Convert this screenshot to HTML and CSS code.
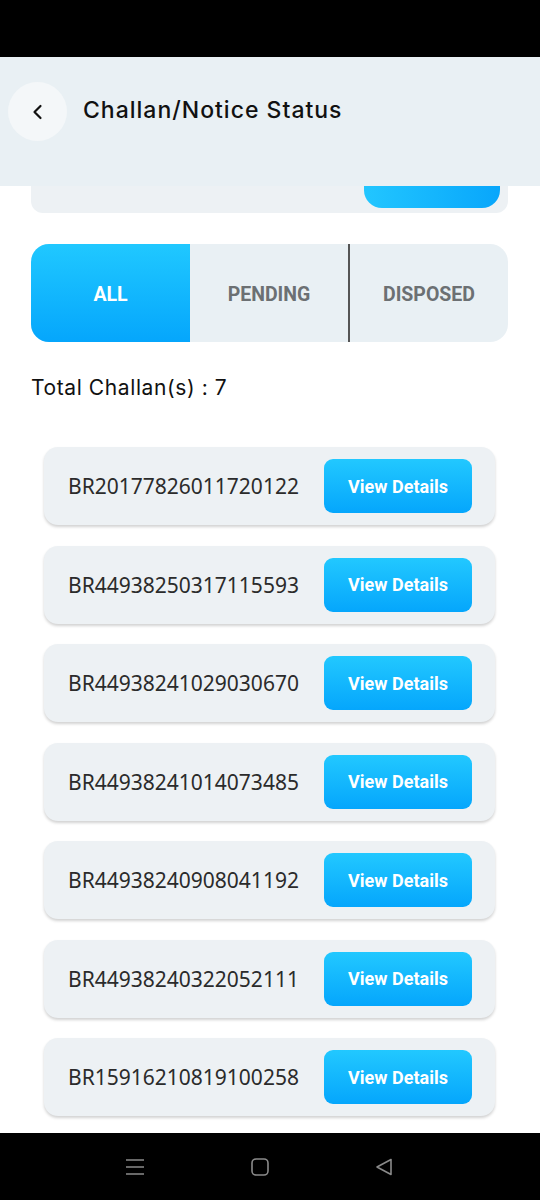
FILE: index.html
```html
<!DOCTYPE html>
<html lang="en">
<head>
    <meta charset="UTF-8">
    <meta name="viewport" content="width=device-width, initial-scale=1.0">
    <title>Challan/Notice Status</title>
    <link rel="stylesheet" href="styles.css">
</head>
<body>

<div class="phone">
    <div class="status-bar"></div>

    <div class="header">
        <div class="back-btn">
            <svg width="20" height="20" viewBox="0 0 20 20"><path d="M12.5 4 L6.5 10 L12.5 16" fill="none" stroke="#111" stroke-width="2.2" stroke-linecap="round" stroke-linejoin="round"/></svg>
        </div>
        <h1>Challan/Notice Status</h1>
    </div>

    <div class="content">
        <!-- card scrolled under the header -->
        <div class="search-card">
            <div class="search-btn"></div>
        </div>

        <div class="tabs">
            <div class="tab active">ALL</div>
            <div class="tab">PENDING</div>
            <div class="tab split">DISPOSED</div>
        </div>

        <p class="total">Total Challan(s) : 7</p>

        <div class="list">
            <div class="challan"><span class="num">BR20177826011720122</span><button class="view">View Details</button></div>
            <div class="challan"><span class="num">BR44938250317115593</span><button class="view">View Details</button></div>
            <div class="challan"><span class="num">BR44938241029030670</span><button class="view">View Details</button></div>
            <div class="challan"><span class="num">BR44938241014073485</span><button class="view">View Details</button></div>
            <div class="challan"><span class="num">BR44938240908041192</span><button class="view">View Details</button></div>
            <div class="challan"><span class="num">BR44938240322052111</span><button class="view">View Details</button></div>
            <div class="challan"><span class="num">BR15916210819100258</span><button class="view">View Details</button></div>
        </div>
    </div>

    <div class="nav-bar">
        <svg width="22" height="20" viewBox="0 0 22 20"><path d="M2 3 H20 M2 10 H20 M2 17 H20" stroke="#8a8a8a" stroke-width="1.6"/></svg>
        <svg width="20" height="20" viewBox="0 0 20 20"><rect x="2" y="2" width="16" height="16" rx="4" fill="none" stroke="#8a8a8a" stroke-width="1.6"/></svg>
        <svg width="20" height="20" viewBox="0 0 20 20"><path d="M17 2.5 V17.5 L3 10 Z" fill="none" stroke="#8a8a8a" stroke-width="1.6" stroke-linejoin="round"/></svg>
    </div>
</div>

</body>
</html>
```

FILE: styles.css
```css
html, body {
    margin: 0;
    padding: 0;
    background: #fff;
}
.phone {
    width: 540px;
    height: 1200px;
    display: flex;
    flex-direction: column;
    overflow: hidden;
    font-family: Inter, "Open Sans", sans-serif;
}
.status-bar {
    height: 57px;
    background: #000;
    flex-shrink: 0;
}
.header {
    height: 129px;
    background: #e9f0f4;
    display: flex;
    align-items: flex-start;
    padding-top: 25px;
    padding-left: 8px;
    box-sizing: border-box;
    flex-shrink: 0;
}
.back-btn {
    width: 59px;
    height: 59px;
    border-radius: 50%;
    background: #f4f7f9;
    display: flex;
    align-items: center;
    justify-content: center;
}
.header h1 {
    margin: 0 0 0 16px;
    line-height: 57px;
    font-size: 23px;
    font-weight: 500;
    color: #111;
    letter-spacing: 1px;
}
.content {
    flex: 1;
    padding: 0 32px 0 31px;
    overflow: hidden;
}
.search-card {
    height: 27px;
    background: #edf1f4;
    border-radius: 0 0 12px 12px;
    display: flex;
    justify-content: flex-end;
    align-items: flex-end;
    padding: 0 8px 5px 0;
    box-sizing: border-box;
}
.search-btn {
    width: 136px;
    height: 22px;
    border-radius: 0 0 18px 18px;
    background: linear-gradient(90deg, #22c6ff, #08a6fb);
}
.tabs {
    margin-top: 31px;
    height: 98px;
    display: grid;
    grid-template-columns: 159px 158px 1fr;
    background: #e9f0f4;
    border-radius: 18px;
    overflow: hidden;
}
.tab {
    display: flex;
    align-items: center;
    justify-content: center;
    padding-top: 3px;
    font-family: Roboto, sans-serif;
    font-weight: 700;
    font-size: 19.5px;
    color: #6c7073;
}
.tab.active {
    background: linear-gradient(180deg, #20c8ff, #05a6fc);
    color: #fff;
}
.tab.split {
    border-left: 2px solid #555;
}
.total {
    margin: 33px 0 0 0;
    font-size: 21px;
    color: #111;
    line-height: 26px;
    letter-spacing: 0.6px;
}
.list {
    margin-top: 46px;
    padding: 0 13px;
    display: flex;
    flex-direction: column;
    gap: 20.5px;
}
.challan {
    height: 78px;
    background: #edf1f4;
    border-radius: 14px;
    box-shadow: 0 2px 3px rgba(0, 0, 0, 0.18);
    display: flex;
    align-items: center;
    justify-content: space-between;
    padding: 0 23px 0 24px;
}
.num {
    font-family: "Noto Sans", sans-serif;
    font-size: 21px;
    color: #2b2b2b;
}
.view {
    width: 148px;
    height: 54px;
    border: none;
    border-radius: 9px;
    background: linear-gradient(180deg, #22c8ff, #05a6fc);
    color: #fff;
    font-family: Roboto, sans-serif;
    font-weight: 700;
    font-size: 18px;
}
.nav-bar {
    height: 67px;
    background: #000;
    flex-shrink: 0;
    display: flex;
    align-items: center;
    justify-content: center;
    gap: 104px;
    padding: 0 22px 0 0;
}
```
